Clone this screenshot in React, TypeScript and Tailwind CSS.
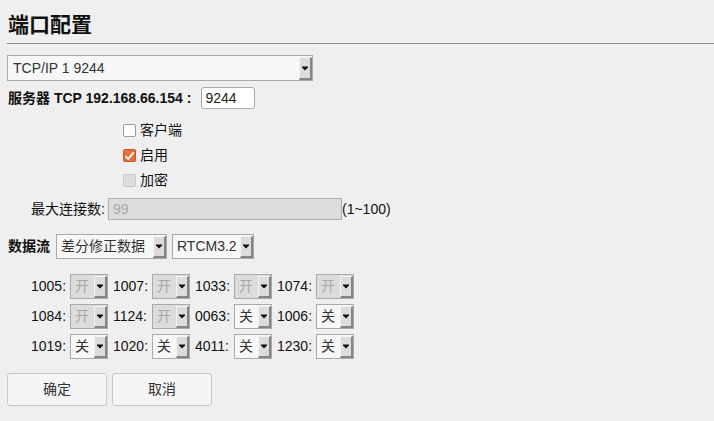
import React from "react";

function Arrow() {
  return (
    <div className="flex items-center justify-center self-stretch mt-[1px] bg-[#dcdcdc] border-t border-l border-t-[#f4f4f4] border-l-[#f4f4f4] border-r-2 border-b-2 border-r-[#858585] border-b-[#858585] w-[13px] shrink-0">
      <svg width="6" height="5" viewBox="0 0 6 5">
        <path d="M0 0.5h6v0.8L3.4 4.3H2.6L0 1.3z" fill="#111" />
      </svg>
    </div>
  );
}

function Select({
  text,
  w,
  h = 25,
  disabled,
  textClass = "",
}: {
  text: string;
  w: number;
  h?: number;
  disabled?: boolean;
  textClass?: string;
}) {
  return (
    <div
      className={`flex border border-[#a9a9a9] ${disabled ? "bg-[#dcdcdc]" : "bg-[#f7f7f7]"}`}
      style={{ width: w, height: h }}
    >
      <div className={`flex-1 flex items-center overflow-hidden whitespace-nowrap ${disabled ? "text-[#a8a8a8]" : "text-[#333]"} ${textClass}`}>
        {text}
      </div>
      <Arrow />
    </div>
  );
}

function Check({ state, label }: { state: "off" | "on" | "disabled"; label: string }) {
  return (
    <div className="h-[25px] flex items-center">
      {state === "on" ? (
        <div className="w-[13px] h-[13px] rounded-[2px] bg-[#e8703f] border border-[#c4542a] flex items-center justify-center">
          <svg width="11" height="10" viewBox="0 0 11 10">
            <path d="M1.5 5.2 L4.2 8 L9.8 1.2" stroke="#fff" strokeWidth="1.8" fill="none" />
          </svg>
        </div>
      ) : state === "off" ? (
        <div className="w-[13px] h-[13px] rounded-[2px] bg-white border border-[#9a9a9a]" />
      ) : (
        <div className="w-[13px] h-[13px] rounded-[2px] bg-[#dedede] border border-[#c8c8c8]" />
      )}
      <span className="ml-[4px] text-[#111]">{label}</span>
    </div>
  );
}

const rows: [string, string, boolean][][] = [
  [
    ["1005:", "开", true],
    ["1007:", "开", true],
    ["1033:", "开", true],
    ["1074:", "开", true],
  ],
  [
    ["1084:", "开", true],
    ["1124:", "开", true],
    ["0063:", "关", false],
    ["1006:", "关", false],
  ],
  [
    ["1019:", "关", false],
    ["1020:", "关", false],
    ["4011:", "关", false],
    ["1230:", "关", false],
  ],
];

export default function App() {
  return (
    <div className="w-[714px] h-[421px] bg-[#efefef] pl-[7px] font-['Liberation_Sans','Noto_Sans_CJK_SC',sans-serif] text-[14px] text-black overflow-hidden">
      <div className="pt-[8px] pb-[5px] border-b border-[#8a8a8a]">
        <div className="ml-[1px] h-[30px] leading-[30px] text-[21px] font-bold font-['Noto_Sans_CJK_SC',sans-serif] text-[#111]">
          端口配置
        </div>
      </div>

      <div className="mt-[11px]">
        <Select text="TCP/IP 1 9244" w={306} h={26} textClass="pl-[5px] text-[#3a3a44]" />
      </div>

      <div className="mt-[6px] h-[22px] flex items-center">
        <span className="ml-[1px] font-bold text-[#111] whitespace-nowrap">服务器 TCP 192.168.66.154 :</span>
        <div className="ml-[10px] w-[54px] h-[22px] bg-white border border-[#a9a9a9] rounded-[3px] flex items-center pl-[3px] text-[#222]">
          9244
        </div>
      </div>

      <div className="mt-[9px] pl-[116px] flex flex-col">
        <Check state="off" label="客户端" />
        <Check state="on" label="启用" />
        <Check state="disabled" label="加密" />
      </div>

      <div className="mt-[5px] h-[22px] flex items-center pl-[24px]">
        <span className="w-[74px] text-[#111] whitespace-nowrap">最大连接数:</span>
        <div className="ml-[3px] w-[234px] h-[22px] bg-[#dcdcdc] border border-[#b0b0b0] flex items-center pl-[4px] text-[#a8a8a8]">
          99
        </div>
        <span className="text-[#111]">(1~100)</span>
      </div>

      <div className="mt-[14px] h-[25px] flex items-center">
        <span className="ml-[1px] font-bold text-[#111]">数据流</span>
        <div className="ml-[6px]">
          <Select text="差分修正数据" w={111} textClass="pl-[4px]" />
        </div>
        <div className="ml-[5px]">
          <Select text="RTCM3.2" w={82} textClass="pl-[4px] text-[#2e3a48]" />
        </div>
      </div>

      <div className="mt-[15px] pl-[24px] flex flex-col gap-[5px]">
        {rows.map((r, i) => (
          <div key={i} className="flex gap-[5px] h-[25px]">
            {r.map(([label, v, dis]) => (
              <div key={label} className="flex items-center">
                <span className="w-[39px] text-[#111]">{label}</span>
                <Select text={v} w={38} disabled={dis} textClass="pl-[4px]" />
              </div>
            ))}
          </div>
        ))}
      </div>

      <div className="mt-[14px] flex gap-[5px]">
        <button className="w-[100px] h-[33px] bg-[#f5f5f5] border border-[#c6c6c6] rounded-[3px] text-[#333] text-[14px]">
          确定
        </button>
        <button className="w-[100px] h-[33px] bg-[#f5f5f5] border border-[#c6c6c6] rounded-[3px] text-[#333] text-[14px]">
          取消
        </button>
      </div>
    </div>
  );
}
